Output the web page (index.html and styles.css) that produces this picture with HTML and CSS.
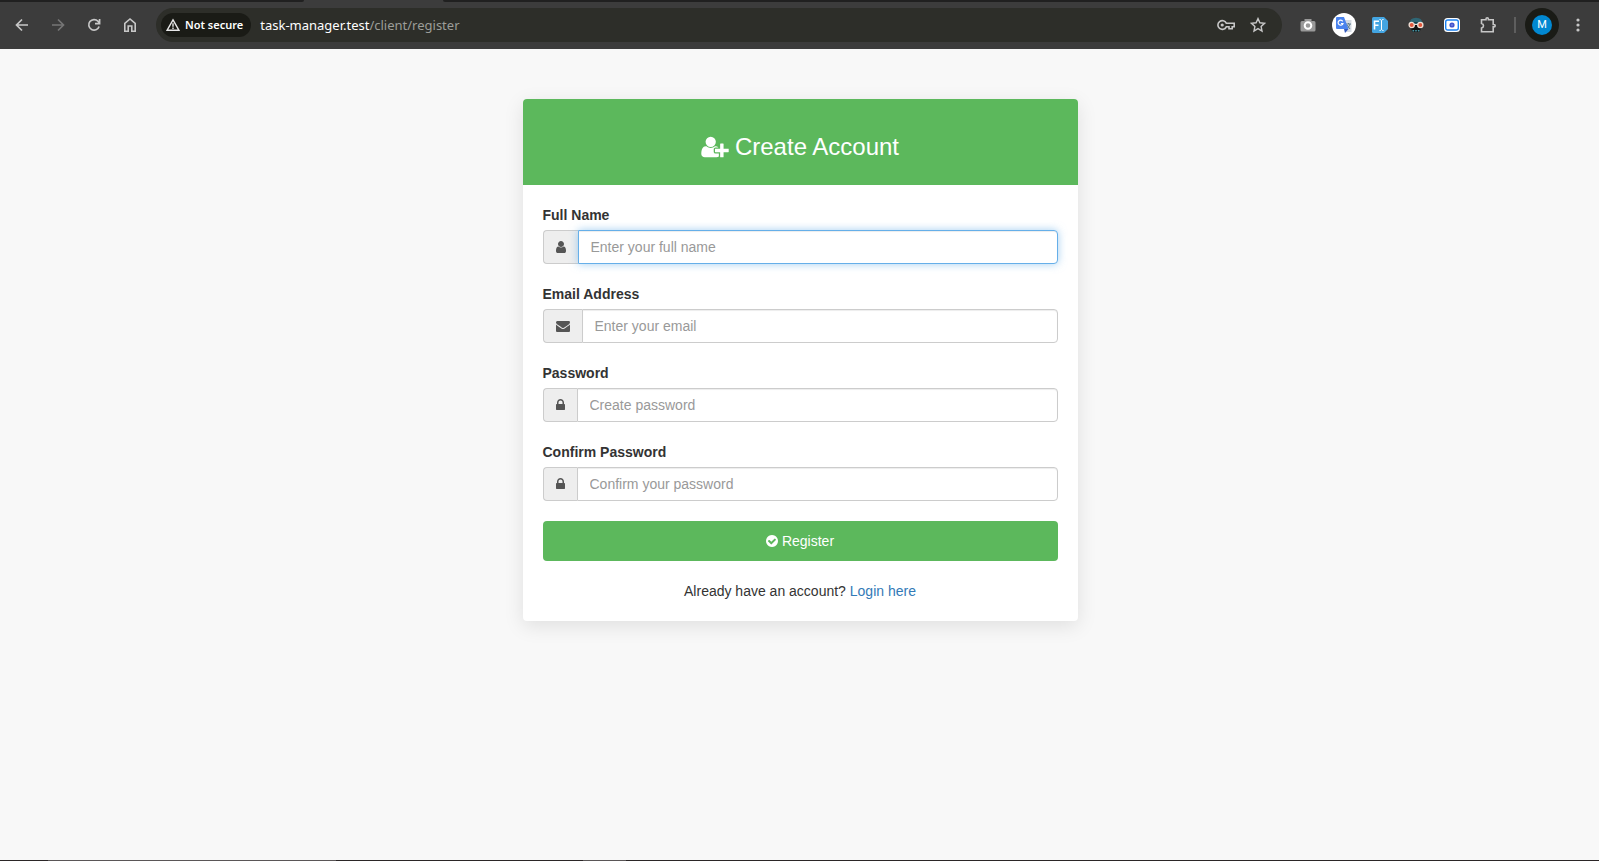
FILE: index.html
```html
<!DOCTYPE html>
<html lang="en">
<head>
<meta charset="utf-8">
<title>Create Account</title>
<link rel="stylesheet" href="styles.css">
</head>
<body>
<header class="browser">
  <div class="tab-strip"><span class="tab-left"></span><span class="tab-right"></span></div>
  <div class="toolbar">
    <nav class="tools">
      <button class="tool" aria-label="Back"><svg width="16" height="16" viewBox="0 0 16 16" fill="none" stroke="#c7c7c7" stroke-width="1.7"><path d="M14 8H3M8 2.5 2.5 8 8 13.5"/></svg></button>
      <button class="tool" aria-label="Forward"><svg width="16" height="16" viewBox="0 0 16 16" fill="none" stroke="#757575" stroke-width="1.7"><path d="M2 8h11M8 2.5 13.5 8 8 13.5"/></svg></button>
      <button class="tool" aria-label="Reload"><svg width="16" height="16" viewBox="0 0 16 16" fill="none" stroke="#c7c7c7" stroke-width="1.7"><path d="M13.1 9.5A5.3 5.3 0 1 1 12 4.3L13.4 6M13.6 2v4.6H9"/></svg></button>
      <button class="tool" aria-label="Home"><svg width="16" height="16" viewBox="0 0 16 16" fill="none" stroke="#c7c7c7" stroke-width="1.6"><path d="M2.8 14.2V6.3L8 2l5.2 4.3v7.9H9.8V9H6.2v5.2z"/></svg></button>
    </nav>
    <div class="address">
      <button class="chip"><svg width="14" height="14" viewBox="0 0 14 14" fill="none" stroke="#e8e8e8" stroke-width="1.4"><path d="M7 1.8 13 12.3H1zM7 5.3v3.4M7 9.6V11"/></svg>Not secure</button>
      <div class="url">task-manager.test<span class="path">/client/register</span></div>
      <button class="mini" aria-label="Passwords"><svg width="18" height="12" viewBox="0 0 18 12" fill="none" stroke="#c7c7c7" stroke-width="1.6"><path d="M9.3 4.2A4.4 4.4 0 1 0 9.3 7.8H12v2h3.2v-2h2V4.2z"/><circle cx="5.2" cy="6" r="1.6" fill="#c7c7c7" stroke="none"/></svg></button>
      <button class="mini" aria-label="Bookmark"><svg width="16" height="16" viewBox="0 0 16 16" fill="none" stroke="#c7c7c7" stroke-width="1.4"><path d="m8 1.6 1.9 4.2 4.6.5-3.4 3.1.9 4.6-4-2.4L4 14l.9-4.6L1.5 6.3l4.6-.5z"/></svg></button>
    </div>
    <div class="tools">
      <button class="tool" aria-label="Screenshot"><svg width="16" height="14" viewBox="0 0 16 14"><path d="M2 3h2.5V1h7v2H14q1.5 0 1.5 1.5V12q0 1.5-1.5 1.5H2Q.5 13.5.5 12V4.5Q.5 3 2 3z" fill="#999"/><circle cx="8" cy="7.5" r="3.3" fill="#999" stroke="#fff" stroke-width="2"/></svg></button>
      <button class="tool" aria-label="Translate"><svg width="24" height="24" viewBox="0 0 24 24"><circle cx="12" cy="12" r="12" fill="#fff"/><path d="M11 7h8.500v12H14z" fill="#d5dbe3"/><path d="M14 11h5M16.500 10v1M18 11q-1 4-4 5M15 12l3 4" stroke="#607d8b" fill="none"/><path d="M5 4h7l4.500 12H5q-1 0-1-1V5q0-1 1-1z" fill="#4a83ee"/><path d="M12 16h4.500L13 20z" fill="#3158bd"/><path d="M10.700 8.300a2.500 2.500 0 1 0 .3 2.200H9" stroke="#fff" stroke-width="1.200" fill="none"/></svg></button>
      <button class="tool" aria-label="Font identifier"><svg width="16" height="16" viewBox="0 0 16 16"><path d="M1.500 0H12l4 4v8l-4 4H1.500Q0 16 0 14.500v-13Q0 0 1.500 0z" fill="#43a5e2"/><path d="M2.500 12.500V4.300h4.500M2.500 8.200h4" fill="none" stroke="#fff" stroke-width="1.600"/><path d="M7.500 2.500q1.500 0 2 1 .5-1 2-1M9.500 3.500v9M7.500 13.500q1.500 0 2-1 .5 1 2 1" fill="none" stroke="#fff"/></svg></button>
      <button class="tool" aria-label="Disguise"><svg width="16" height="16" viewBox="0 0 16 16"><path d="M1.500 7Q1.500.7 8 .7T14.500 7z" fill="#2f6675"/><path d="M1.500 5.500h13" stroke="#1c3e48"/><path d="M3 8h10v3.500l-1.500 3.500h-7L3 11.500z" fill="#111"/><circle cx="3.700" cy="8" r="2.600" fill="#e2573c" stroke="#f0dfd5" stroke-width="1.300"/><circle cx="12.300" cy="8" r="2.600" fill="#e2573c" stroke="#f0dfd5" stroke-width="1.300"/><path d="M6.300 7.500h3.400" stroke="#f0dfd5"/><path d="M4.500 13.700h1.700M7.200 13.700h1.600M9.800 13.700h1.700" stroke="#4996a5" stroke-width="1.400"/></svg></button>
      <button class="tool" aria-label="Recorder"><svg width="16" height="14" viewBox="0 0 16 14"><rect width="16" height="14" rx="3.500" fill="#fff"/><rect x="1.700" y="2" width="12.600" height="10" rx="2" fill="#fff" stroke="#1a80f0" stroke-width="1.400"/><circle cx="8" cy="7" r="2.600" fill="#4353cc"/><circle cx="8" cy="7" r=".8" fill="#8f9bea"/></svg></button>
      <button class="tool" aria-label="Extensions"><svg width="18" height="18" viewBox="0 0 18 18"><path d="M2.500 3.800H7V3a1.200 1.200 0 0 1 2.400 0v.8h4.800v4.700h.8a1.200 1.200 0 0 1 0 2.400h-.8v4.800H2.500v-3.600q2-.5 2-2.300t-2-2.300z" fill="none" stroke="#c7c7c7" stroke-width="1.600"/></svg></button>
    </div>
    <span class="divider"></span>
    <button class="profile"><span class="avatar">M</span></button>
    <button class="tool" aria-label="Menu"><svg width="4" height="16" viewBox="0 0 4 16" fill="#c7c7c7"><circle cx="2" cy="3" r="1.600"/><circle cx="2" cy="8" r="1.600"/><circle cx="2" cy="13" r="1.600"/></svg></button>
  </div>
</header>

<main class="page">
  <section class="card">
    <div class="card-header">
      <h3 class="title"><svg class="title-icon" viewBox="0 0 2048 1792" fill="currentColor"><path d="M704 896q-159 0-271.500-112.500T320 512t112.500-271.500T704 128t271.500 112.500T1088 512 975.500 783.500 704 896zM1664 1024h352q13 0 22.500 9.500t9.500 22.500v192q0 13-9.500 22.500t-22.500 9.500h-352v352q0 13-9.500 22.500t-22.500 9.500h-192q-13 0-22.500-9.500t-9.500-22.500v-352h-352q-13 0-22.500-9.500t-9.500-22.500v-192q0-13 9.500-22.500t22.500-9.500h352V672q0-13 9.500-22.500t22.500-9.500h192q13 0 22.500 9.500t9.500 22.500zM928 1248q0 52 38 90t90 38h256v238q-68 50-171 50H267q-121 0-194-69T0 1405q0-53 3.500-103.500t14-109T44 1084t43-97.500 62-81 85.500-53.500T346 832q19 0 39 17 79 61 154.500 91.500T704 971t164.500-30.500T1023 849q20-17 39-17 132 0 217 96h-223q-52 0-90 38t-38 90z"/></svg>Create Account</h3>
    </div>
    <form class="card-body">
      <div class="field">
        <label for="name">Full Name</label>
        <div class="group">
          <span class="addon"><svg width="10" height="14" viewBox="256 0 1280 1792" fill="currentColor"><path d="M1536 1399q0 109-62.500 187t-150.500 78h-854q-88 0-150.500-78t-62.500-187q0-85 8.500-160.500t31.500-152 58.500-131 94-89 134.500-34.500q131 128 313 128t313-128q76 0 134.500 34.500t94 89 58.500 131 31.500 152 8.500 160.500zm-256-887q0 159-112.500 271.500t-271.500 112.500-271.500-112.500-112.500-271.500 112.500-271.500 271.500-112.500 271.500 112.500 112.500 271.500z"/></svg></span>
          <input class="control active" id="name" type="text" placeholder="Enter your full name">
        </div>
      </div>
      <div class="field">
        <label for="email">Email Address</label>
        <div class="group">
          <span class="addon"><svg width="14" height="14" viewBox="0 0 1792 1792" fill="currentColor"><path d="M1792 710v794q0 66-47 113t-113 47h-1472q-66 0-113-47t-47-113v-794q44 49 101 87 362 246 497 345 57 42 92.500 65.500t94.500 48 110 24.500h2q51 0 110-24.500t94.500-48 92.500-65.500q170-123 498-345 57-39 100-87zm0-294q0 79-49 151t-122 123q-376 261-468 325-10 7-42.500 31t-54 38.500-52 32.500-57.500 27-50 9h-2q-23 0-50-9t-57.500-27-52-32.500-54-38.500-42.500-31q-91-64-262-182.500t-205-142.500q-62-42-117-115.500t-55-136.500q0-78 41.500-130t118.500-52h1472q65 0 112.500 47t47.500 113z"/></svg></span>
          <input class="control" id="email" type="email" placeholder="Enter your email">
        </div>
      </div>
      <div class="field">
        <label for="password">Password</label>
        <div class="group">
          <span class="addon"><svg width="9" height="14" viewBox="320 0 1152 1792" fill="currentColor"><path d="M640 768h512v-192q0-106-75-181t-181-75-181 75-75 181v192zm832 96v576q0 40-28 68t-68 28h-960q-40 0-68-28t-28-68v-576q0-40 28-68t68-28h32v-192q0-184 132-316t316-132 316 132 132 316v192h32q40 0 68 28t28 68z"/></svg></span>
          <input class="control" id="password" type="password" placeholder="Create password">
        </div>
      </div>
      <div class="field">
        <label for="confirm">Confirm Password</label>
        <div class="group">
          <span class="addon"><svg width="9" height="14" viewBox="320 0 1152 1792" fill="currentColor"><path d="M640 768h512v-192q0-106-75-181t-181-75-181 75-75 181v192zm832 96v576q0 40-28 68t-68 28h-960q-40 0-68-28t-28-68v-576q0-40 28-68t68-28h32v-192q0-184 132-316t316-132 316 132 132 316v192h32q40 0 68 28t28 68z"/></svg></span>
          <input class="control" id="confirm" type="password" placeholder="Confirm your password">
        </div>
      </div>
      <button class="register" type="submit"><svg width="12" height="14" viewBox="128 0 1536 1792" fill="currentColor"><path d="M1412 734q0-28-18-46l-91-90q-19-19-45-19t-45 19l-408 407-226-226q-19-19-45-19t-45 19l-91 90q-18 18-18 46 0 27 18 45l362 362q19 19 45 19 27 0 46-19l543-543q18-18 18-45zm252 162q0 209-103 385.500t-279.500 279.500-385.500 103-385.500-103-279.500-279.500-103-385.500 103-385.500 279.500-279.500 385.500-103 385.500 103 279.500 279.500 103 385.500z"/></svg>Register</button>
      <p class="login">Already have an account? <a href="#login">Login here</a></p>
    </form>
  </section>
</main>
<footer class="taskbar"><span class="task-wide"></span><span class="task-small"></span></footer>
</body>
</html>
```

FILE: styles.css
```css
* { box-sizing: border-box; }

body {
  margin: 0;
  min-height: 100vh;
  display: flex;
  flex-direction: column;
  background: #f8f8f8;
  color: #333;
  font: 14px/20px "Liberation Sans", Arial, sans-serif;
}

button { font: inherit; border: 0; padding: 0; background: none; }
svg { display: block; flex: none; }

/* Browser bar */
.browser { background: #3c3c3c; font-family: "Noto Sans", sans-serif; }
.tab-strip { display: flex; justify-content: space-between; gap: 139px; height: 2px; }
.tab-left { width: 19%; background: #202020; border-bottom-right-radius: 2px; }
.tab-right { flex: 1; background: #202020; border-bottom-left-radius: 2px; }
.toolbar { display: flex; align-items: center; height: 47px; padding: 0 3px 1px 4px; }
.tools { display: flex; }
.tool {
  width: 36px;
  height: 36px;
  display: flex;
  align-items: center;
  justify-content: center;
}
.address {
  flex: 1;
  display: flex;
  align-items: center;
  height: 34px;
  margin: 0 8px;
  padding: 0 8px 0 5px;
  border-radius: 17px;
  background: #2d2e29;
}
.chip {
  display: flex;
  align-items: center;
  gap: 5px;
  height: 24px;
  padding: 0 8px 0 5px;
  border-radius: 12px;
  background: #1a1b16;
  color: #fff;
  font-size: 11px;
  font-weight: 600;
}
.url { flex: 1; margin-left: 9px; color: #fff; font-size: 13px; }
.path { color: #9c9d98; }
.mini { width: 32px; height: 32px; display: flex; align-items: center; justify-content: center; }
.divider { width: 2px; height: 16px; margin: 0 9px 0 8px; background: #5e5e5e; }
.profile {
  display: flex;
  align-items: center;
  justify-content: center;
  width: 34px;
  height: 34px;
  margin-right: 1px;
  border-radius: 50%;
  background: #1a1b16;
}
.avatar {
  width: 20px;
  height: 20px;
  border-radius: 50%;
  background: #0288d1;
  color: #fff;
  font: 11px/20px Roboto, sans-serif;
  text-align: center;
}

/* Registration card */
.page { flex: 1; padding: 50px 15px 50px 16px; }
.card {
  max-width: 555px;
  margin: 0 auto;
  border-radius: 4px;
  background: #fff;
  box-shadow: 0 5px 20px rgba(0, 0, 0, 0.1);
}
.card-header {
  padding: 35px 20px 25px;
  border-radius: 4px 4px 0 0;
  background: #5cb85c;
  color: #fff;
}
.title {
  display: flex;
  align-items: center;
  justify-content: center;
  gap: 6px;
  margin: 0;
  font-size: 24px;
  font-weight: 500;
  line-height: 26px;
}
.title-icon { width: 28px; height: 24px; }
.card-body { padding: 20px; }
.field { margin-bottom: 20px; }
.field label { display: block; margin-bottom: 5px; font-weight: 700; }
.group { display: flex; height: 34px; }
.addon {
  display: flex;
  align-items: center;
  padding: 0 12px;
  border: 1px solid #ccc;
  border-right: 0;
  border-radius: 4px 0 0 4px;
  background: #eee;
  color: #555;
}
.control {
  flex: 1;
  min-width: 0;
  padding: 6px 12px;
  border: 1px solid #ccc;
  border-radius: 0 4px 4px 0;
  outline: 0;
  background: #fff;
  box-shadow: inset 0 1px 1px rgba(0, 0, 0, 0.075);
  color: #555;
  font: inherit;
}
.control::placeholder { color: #999; opacity: 1; }
.control.active,
.control:focus {
  border-color: #66afe9;
  box-shadow: inset 0 1px 1px rgba(0, 0, 0, 0.075), 0 0 8px rgba(102, 175, 233, 0.6);
}
.register {
  display: flex;
  align-items: center;
  justify-content: center;
  gap: 4px;
  width: 100%;
  height: 40px;
  border-radius: 4px;
  background: #5cb85c;
  color: #fff;
}
.login { margin: 20px 0 0; text-align: center; }
.login a { color: #337ab7; text-decoration: none; }

/* Sliver of the desktop taskbar */
.taskbar { display: flex; height: 1px; padding-left: 3%; background: #2b2627; }
.task-wide { width: 288px; margin-right: 247px; background: #5a5657; }
.task-small { width: 43px; background: #5a5657; }
```
